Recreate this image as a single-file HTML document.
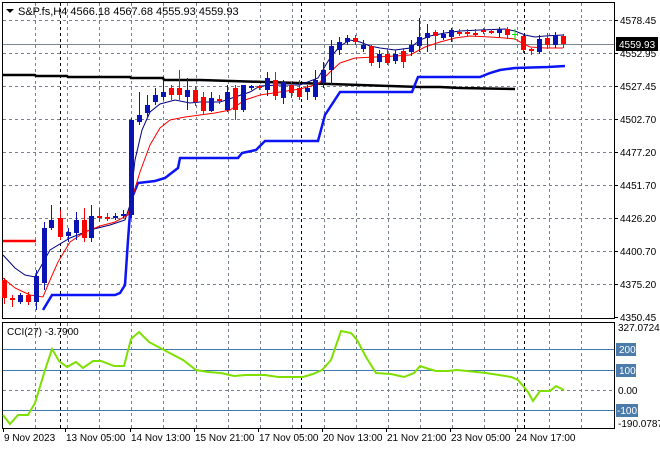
<!DOCTYPE html>
<html><head><style>
html,body{margin:0;padding:0;background:#fff;width:660px;height:450px;overflow:hidden}
svg{display:block;font-family:"Liberation Sans",sans-serif}
</style></head><body>
<svg id="s" width="660" height="450" xmlns="http://www.w3.org/2000/svg">
<rect width="660" height="450" fill="#fff"/>
<g id="grid" stroke="#77808c" stroke-dasharray="3,3" stroke-width="1"></g>
<!-- frames -->
<rect x="2.5" y="2.5" width="612" height="316" fill="none" stroke="#000"/>
<rect x="2.5" y="322.5" width="612" height="106" fill="none" stroke="#000"/>
<!-- price line -->
<line x1="3" y1="44.5" x2="614" y2="44.5" stroke="#7b8795"/>
<!-- black MA -->
<polyline points="3,75 35,75 36,76 67,76 68,77 100,77 130,77 131,78 163,78 164,80 200,80 330,84 360,85 390,86 420,87 440,87 460,88 515,89" fill="none" stroke="#000" stroke-width="2.5"/>
<!-- red level -->
<line x1="3" y1="241" x2="36" y2="241" stroke="#f00" stroke-width="2.5"/>
<!-- blue thick -->
<polyline points="43,310 52,295 115,295 120,293 125,285 128,240 131,200 138,183 155,181 165,178 178,168 180,158 238,158 242,153 256,150 265,141 318,141 325,115 340,92 412,92 418,77 480,77 490,73 500,70 515,68 548,67 565,66" fill="none" stroke="#0a14f5" stroke-width="2.5"/>
<!-- navy MA -->
<polyline points="3,255 15,268 25,275 35,277 50,250 70,238 90,230 110,225 125,220 130,205 135,160 142,130 150,112 160,104 175,100 190,103 200,102 220,102 235,97 250,92 260,86 280,85 300,85 318,78 330,58 340,46 350,40 360,42 370,46 380,48 395,50 410,48 420,40 430,36 445,33 460,31 480,30 505,29 515,31 525,35 535,37 545,36 563,35" fill="none" stroke="#000080" stroke-width="1"/>
<!-- red MA -->
<polyline points="3,278 15,288 30,295 43,297 50,280 58,262 70,242 85,232 100,226 115,222 128,215 133,195 140,172 150,145 160,128 170,120 185,117 200,115 215,113 230,110 245,100 260,95 280,92 300,89 318,84 330,72 340,63 355,58 375,57 395,56 410,55 425,47 440,42 455,38 470,36 490,37 505,38 515,39 522,43 530,47 545,48 563,48" fill="none" stroke="#f00" stroke-width="1"/>
<g id="candles"></g>
<!-- green cross -->
<line x1="515" y1="29" x2="515" y2="40" stroke="#00e000"/><line x1="512" y1="34.5" x2="518" y2="34.5" stroke="#00e000"/>
<!-- CCI levels -->
<g stroke="#3c78b4" stroke-width="1">
<line x1="3" y1="349.5" x2="614" y2="349.5"/>
<line x1="3" y1="370.5" x2="614" y2="370.5"/>
<line x1="3" y1="410.5" x2="614" y2="410.5"/>
</g>
<line x1="3" y1="390.5" x2="614" y2="390.5" stroke="#77808c" stroke-dasharray="3,3"/>
<polyline points="3,415 10,424 18,415 28,415 35,403 45,370 52,349 59,361 67,367 76,362 83,368 93,361 101,361 114,366 124,366 131,339 139,332 149,342 164,350 183,360 196,370 208,372 221,373 234,376 246,375 265,375 278,377 297,377 303,377 313,374 322,370 331,360 341,331 351,333 357,340 366,357 376,373 391,374 404,377 414,373 420,366 429,369 436,371 448,371 457,370 467,371 486,373 499,375 511,377 518,380 528,392 533,401 540,391 550,391 556,386 564,390" fill="none" stroke="#7ee000" stroke-width="2"/>
<!-- header text -->
<polygon points="6,9 14,9 10,13" fill="#000"/>
<text x="18" y="15" font-size="11" fill="#000">S&amp;P.fs,H4  4566.18 4567.68 4555.93 4559.93</text>
<text x="7" y="335" font-size="10" fill="#000">CCI(27) -3.7900</text>
<!-- axes -->
<g font-size="10" fill="#000" id="axis"></g>
<rect x="616" y="37" width="42" height="14" fill="#000"/>
<text x="619" y="48" font-size="10" fill="#fff">4559.93</text>
<g font-size="10" fill="#fff">
<rect x="616" y="343" width="20" height="13" fill="#4b7bab"/><text x="619" y="353">200</text>
<rect x="616" y="364" width="20" height="13" fill="#4b7bab"/><text x="619" y="374">100</text>
<rect x="616" y="404" width="22" height="13" fill="#4b7bab"/><text x="617" y="414">-100</text>
</g>
<g font-size="10" fill="#000">
<text x="618" y="331">327.0724</text>
<text x="618" y="394">0.00</text>
<text x="618" y="427">-190.0787</text>
</g>
</svg>
<script>
var NS="http://www.w3.org/2000/svg",g=document.getElementById('grid');
function el(p,t,a){var e=document.createElementNS(NS,t);for(var k in a)e.setAttribute(k,a[k]);p.appendChild(e);return e;}
for(var i=0;i<18;i++){var x=Math.round(35+i*32.1)+.5;if(x>613)break;
 el(g,'line',{x1:x,y1:3,x2:x,y2:318});el(g,'line',{x1:x,y1:323,x2:x,y2:428});}
[20,53,86,119,152,185,218,251,284].forEach(function(y){el(g,'line',{x1:3,y1:y+.5,x2:614,y2:y+.5});});
[60,301,524].forEach(function(x){el(g,'line',{x1:x+.5,y1:3,x2:x+.5,y2:318,stroke:'#000'});el(g,'line',{x1:x+.5,y1:323,x2:x+.5,y2:428,stroke:'#000'});});
var ax=document.getElementById('axis');
var pl=[["4578.45",20],["4552.95",53],["4527.45",86],["4502.70",119],["4477.20",152],["4451.70",185],["4426.20",218],["4400.70",251],["4375.20",284],["4350.45",317]];
pl.forEach(function(p){el(ax,'line',{x1:614,y1:p[1]+.5,x2:618,y2:p[1]+.5,stroke:'#000'});var t=el(ax,'text',{x:620,y:p[1]+4});t.textContent=p[0];});
var dl=[["9 Nov 2023",3],["13 Nov 05:00",65],["14 Nov 13:00",130],["15 Nov 21:00",194],["17 Nov 05:00",258],["20 Nov 13:00",322],["21 Nov 21:00",386],["23 Nov 05:00",450],["24 Nov 17:00",515]];
dl.forEach(function(d){el(ax,'line',{x1:d[1]+.5,y1:428,x2:d[1]+.5,y2:432,stroke:'#000'});var t=el(ax,'text',{x:d[1]+1,y:441});t.textContent=d[0];});
var c=document.getElementById('candles');
var D=[[4,280,298,278,304,'r'],[12,298,300,295,307,'r'],[20,295,302,293,304,'b'],[28,295,302,292,305,'r'],[36,276,302,270,310,'b'],[44,228,283,222,290,'b'],[51,220,228,205,230,'b'],[60,218,237,210,240,'r'],[68,232,236,228,242,'b'],[76,220,233,212,240,'b'],[84,220,238,208,242,'r'],[91,216,238,205,242,'b'],[99,216,218,208,222,'r'],[107,217,219,213,221,'r'],[115,216,218,213,220,'b'],[123,214,216,210,218,'b'],[131,120,215,118,218,'b'],[139,115,122,92,125,'b'],[147,105,113,95,118,'b'],[155,95,102,88,105,'b'],[163,92,97,80,100,'b'],[171,88,95,85,100,'r'],[179,88,95,70,100,'r'],[187,90,97,78,110,'b'],[195,90,102,86,106,'r'],[203,97,111,92,115,'r'],[211,98,111,92,112,'b'],[219,99,101,95,104,'r'],[227,92,110,85,112,'b'],[235,88,110,85,120,'r'],[243,85,110,85,112,'b'],[251,86,88,85,90,'b'],[259,86,88,85,90,'r'],[267,78,90,72,96,'b'],[275,80,96,72,100,'r'],[283,82,98,80,104,'b'],[291,85,93,82,98,'r'],[299,88,97,80,100,'r'],[307,88,92,85,100,'b'],[315,80,97,70,100,'b'],[323,70,83,62,88,'b'],[331,46,70,40,85,'b'],[339,42,50,37,55,'b'],[347,38,42,35,45,'b'],[355,38,42,35,45,'r'],[363,45,49,40,52,'b'],[371,46,63,45,66,'r'],[379,54,62,50,68,'b'],[387,54,63,48,65,'r'],[395,54,61,50,64,'b'],[403,51,62,48,68,'r'],[411,45,52,40,56,'b'],[419,37,46,18,52,'b'],[427,33,38,24,52,'b'],[435,32,36,30,50,'r'],[443,34,38,30,40,'b'],[451,30,37,28,42,'b'],[459,32,34,29,36,'r'],[467,32,34,29,36,'r'],[475,33,35,29,37,'r'],[483,30,32,28,34,'r'],[491,31,33,29,34,'r'],[499,29,33,27,37,'b'],[507,29,35,27,39,'r'],[523,36,50,34,53,'r'],[531,49,51,48,55,'r'],[539,39,52,35,54,'b'],[547,38,45,33,49,'r'],[555,35,45,32,48,'b'],[563,36,44,34,48,'r']];
D.forEach(function(d){var col=d[5]=='r'?'#ff0000':'#0a14b4';
 el(c,'line',{x1:d[0]+.5,y1:d[3],x2:d[0]+.5,y2:d[4],stroke:col});
 el(c,'rect',{x:d[0]-2,y:d[1],width:5,height:Math.max(2,d[2]-d[1]),fill:col});});
</script>
</body></html>
